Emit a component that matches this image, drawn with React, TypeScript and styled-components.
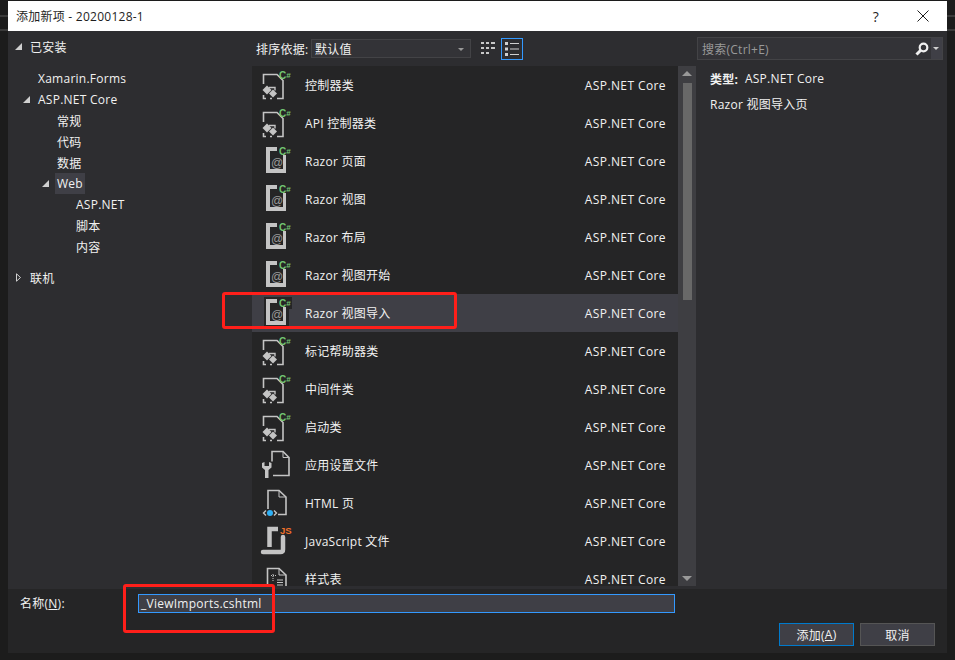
import React from "react";
import styled, { createGlobalStyle } from "styled-components";

const FONT = `"Open Sans", "Noto Sans CJK SC", sans-serif`;

const GlobalStyle = createGlobalStyle`
  html, body {
    margin: 0;
    padding: 0;
    background: #1c1c1c;
  }
  * {
    box-sizing: border-box;
  }
`;

type IconKind = "class" | "razor" | "settings" | "html" | "js" | "style";

const templates: { label: string; icon: IconKind }[] = [
  { label: "控制器类", icon: "class" },
  { label: "API 控制器类", icon: "class" },
  { label: "Razor 页面", icon: "razor" },
  { label: "Razor 视图", icon: "razor" },
  { label: "Razor 布局", icon: "razor" },
  { label: "Razor 视图开始", icon: "razor" },
  { label: "Razor 视图导入", icon: "razor" },
  { label: "标记帮助器类", icon: "class" },
  { label: "中间件类", icon: "class" },
  { label: "启动类", icon: "class" },
  { label: "应用设置文件", icon: "settings" },
  { label: "HTML 页", icon: "html" },
  { label: "JavaScript 文件", icon: "js" },
  { label: "样式表", icon: "style" },
];

const tree: { label: string; level: number; open?: boolean; active?: boolean }[] = [
  { label: "Xamarin.Forms", level: 1 },
  { label: "ASP.NET Core", level: 1, open: true },
  { label: "常规", level: 2 },
  { label: "代码", level: 2 },
  { label: "数据", level: 2 },
  { label: "Web", level: 2, open: true, active: true },
  { label: "ASP.NET", level: 3 },
  { label: "脚本", level: 3 },
  { label: "内容", level: 3 },
];

const CSharp = () => (
  <text x="19" y="13" fontFamily={`"Liberation Sans", sans-serif`} fontSize="10" fontWeight="700" fill="#72c472" letterSpacing="0">
    C<tspan fontSize="8" dy="-1">#</tspan>
  </text>
);

const TemplateIcon = ({ kind, backed }: { kind: IconKind; backed?: boolean }) => (
  <svg width="32" height="38" viewBox="0 0 32 38">
    {kind === "class" && (
      <>
        <path d="M3.500 18V8.500H17L23 14.500V32.500H17" fill="none" stroke="#c4c4c4" strokeWidth="1.600" />
        <path d="M3.500 29V32.500H6M12 32.500H10" fill="none" stroke="#c4c4c4" strokeWidth="1.600" />
        <path d="M2.500 24l4.500-4.500 4.500 4.500-4.500 4.500z" fill="#c4c4c4" />
        <path d="M9 27.500l4-4 4 4-4 4z" fill="#c4c4c4" />
        <path d="M9 21.500h6v3" fill="none" stroke="#c4c4c4" strokeWidth="1.400" />
        <CSharp />
      </>
    )}
    {kind === "razor" && (
      <>
        {backed && <path d="M4 3H32V15H29V33H4z" fill="#252526" />}
        <path d="M6 5H17V9H10V27H23V13H26V31H6z" fill="#c4c4c4" />
        <text x="11" y="25" fontFamily={`"Liberation Sans", sans-serif`} fontSize="12" fill="#9a9a9a" letterSpacing="0">
          @
        </text>
        <CSharp />
      </>
    )}
    {kind === "settings" && (
      <>
        <path d="M12 15.500V5.500H23L29 11.500V29.500H13" fill="none" stroke="#c4c4c4" strokeWidth="1.600" />
        <path d="M23 5.500V11.500H29" fill="none" stroke="#c4c4c4" strokeWidth="1" />
        <path d="M2 17V21.500L5 24V32H8.500V24L11.500 21.500V17L9 16V20H4.500V16z" fill="#c4c4c4" />
      </>
    )}
    {kind === "html" && (
      <>
        <path d="M8 25V6.500H19L26 13V30.500H18" fill="none" stroke="#c4c4c4" strokeWidth="1.600" />
        <path d="M19 6.500V13H26" fill="none" stroke="#c4c4c4" strokeWidth="1" />
        <path d="M6 26.500L3.500 29L6 31.500M14 26.500L16.500 29L14 31.500" fill="none" stroke="#c4c4c4" strokeWidth="1.400" />
        <circle cx="10" cy="29" r="3" fill="#2fb0f5" />
      </>
    )}
    {kind === "js" && (
      <>
        <path d="M9.500 25V7H18" fill="none" stroke="#c4c4c4" strokeWidth="4.500" />
        <path d="M23 15V27.500C23 29 22 30 20.500 30H3" fill="none" stroke="#c4c4c4" strokeWidth="4.500" strokeLinecap="round" />
        <text x="20" y="12" fontFamily={`"Liberation Sans", sans-serif`} fontSize="9.500" fontWeight="700" fill="#f0702a" letterSpacing="0">
          JS
        </text>
      </>
    )}
    {kind === "style" && (
      <>
        <path d="M7.500 26V8.500H19L26 15V33H12" fill="none" stroke="#c4c4c4" strokeWidth="1.600" />
        <path d="M19 8.500V15H26" fill="none" stroke="#c4c4c4" strokeWidth="1" />
        <path d="M13 14V22M11 15.500H16" fill="none" stroke="#c4c4c4" strokeWidth="1" strokeDasharray="1 1" />
        <path d="M17 20H23M17 22.500H23M17 25H23" stroke="#c4c4c4" strokeWidth="1" />
        <path d="M8 25l3 0 0 3z" fill="#e5506a" />
      </>
    )}
  </svg>
);

const Caret = ({ open }: { open?: boolean }) => (
  <svg width="7" height="9" viewBox="0 0 7 9">
    {open ? (
      <path d="M0 8L7 1V8z" fill="#d0d0d0" />
    ) : (
      <path d="M1.500 0.800L5.500 4.500L1.500 8.200z" fill="none" stroke="#d0d0d0" strokeWidth="1" />
    )}
  </svg>
);

export default function App() {
  return (
    <Backdrop>
      <GlobalStyle />
      <Dialog>
        <TitleBar>
          <span>添加新项 - 20200128-1</span>
          <TitleButtons>
            <TitleHelp>?</TitleHelp>
            <svg width="12" height="12" viewBox="0 0 12 12">
              <path d="M0.500 0.500L11.500 11.500M11.500 0.500L0.500 11.500" stroke="#1e1e1e" strokeWidth="1" />
            </svg>
          </TitleButtons>
        </TitleBar>

        <Main>
          <TreePane>
            <TreeRow $level={0}>
              <CaretSlot><Caret open /></CaretSlot>
              <TreeLabel>已安装</TreeLabel>
            </TreeRow>
            <TreeGroup>
              {tree.map((item) => (
                <TreeRow key={item.label} $level={item.level}>
                  <CaretSlot>{item.open && <Caret open />}</CaretSlot>
                  <TreeLabel $active={item.active}>{item.label}</TreeLabel>
                </TreeRow>
              ))}
            </TreeGroup>
            <TreeRow $level={0}>
              <CaretSlot><Caret /></CaretSlot>
              <TreeLabel>联机</TreeLabel>
            </TreeRow>
          </TreePane>

          <CenterPane>
            <Toolbar>
              <SortLabel>排序依据:</SortLabel>
              <SortSelect>
                <span>默认值</span>
                <SelectArrow />
              </SortSelect>
              <ViewButton>
                <svg width="14" height="15" viewBox="0 0 14 15">
                  <path d="M0 1h3v2H0zM5 1h3v2H5zM10 1h4v2h-4zM0 6h3v2H0zM5 6h3v2H5zM10 6h4v2h-4zM0 11h3v2H0zM5 11h3v2H5z" fill="#c8c8c8" />
                </svg>
              </ViewButton>
              <ViewButton $active>
                <svg width="14" height="14" viewBox="0 0 14 14">
                  <path d="M0 0h3v3H0zM0 5.500h3v3H0zM0 11h3v3H0z" fill="#d0d0d0" />
                  <path d="M5 1.500h9M5 7h9M5 12.500h9" stroke="#d0d0d0" strokeWidth="1" />
                </svg>
              </ViewButton>
            </Toolbar>
            <ListArea>
              <TemplateList>
                {templates.map((item, index) => (
                  <TemplateRow key={item.label} $selected={index === 6}>
                    <TemplateIcon kind={item.icon} backed={index === 6} />
                    <TemplateName>{item.label}</TemplateName>
                    <TemplateType>ASP.NET Core</TemplateType>
                  </TemplateRow>
                ))}
              </TemplateList>
              <ScrollBar>
                <ScrollArrow $up />
                <ScrollTrack>
                  <ScrollThumb />
                </ScrollTrack>
                <ScrollArrow />
              </ScrollBar>
            </ListArea>
          </CenterPane>

          <DetailPane>
            <SearchBox>
              <SearchText>搜索(Ctrl+E)</SearchText>
              <SearchIcon>
                <svg width="14" height="14" viewBox="0 0 14 14">
                  <circle cx="8.500" cy="5.500" r="3.800" fill="none" stroke="#f0f0f0" strokeWidth="2.200" />
                  <path d="M5.500 8.500L1.500 12.500" stroke="#f0f0f0" strokeWidth="3" />
                </svg>
              </SearchIcon>
              <SearchDrop />
            </SearchBox>
            <DetailLine>
              <b>类型:</b>&nbsp; ASP.NET Core
            </DetailLine>
            <DetailLine>Razor 视图导入页</DetailLine>
          </DetailPane>
        </Main>

        <Footer>
          <NameRow>
            <NameLabel>
              名称(<u>N</u>):
            </NameLabel>
            <NameInput>_ViewImports.cshtml</NameInput>
          </NameRow>
          <ButtonRow>
            <DialogButton $primary>
              添加(<u>A</u>)
            </DialogButton>
            <DialogButton>取消</DialogButton>
          </ButtonRow>
        </Footer>
      </Dialog>
      <Callout $x={222} $y={292} $w={235} $h={37} />
      <Callout $x={123} $y={584} $w={152} $h={49} />
    </Backdrop>
  );
}

const Backdrop = styled.div`
  position: relative;
  width: 955px;
  height: 660px;
  padding: 1px 8px 7px 8px;
  overflow: hidden;
  background: linear-gradient(#1c1c1c 15px, #3a3a3a 15px, #3a3a3a 17px, #1c1c1c 17px, #1c1c1c 29px, #3a3a3a 29px, #3a3a3a 31px, #1c1c1c 31px);
  font-family: ${FONT};
  font-size: 12px;
  letter-spacing: 0.25px;
  color: #f1f1f1;
`;

const Dialog = styled.div`
  display: flex;
  flex-direction: column;
  height: 652px;
  background: #2d2d30;
`;

const TitleBar = styled.div`
  display: flex;
  align-items: center;
  justify-content: space-between;
  flex: 0 0 30px;
  padding: 0 18px 0 8px;
  background: #ffffff;
  color: #1e1e1e;
  font-size: 12px;
`;

const TitleButtons = styled.div`
  display: flex;
  align-items: center;
  gap: 38px;
`;

const TitleHelp = styled.span`
  font-size: 14px;
`;

const Main = styled.div`
  display: grid;
  grid-template-columns: 244px 444px 251px;
  flex: 0 0 558px;
`;

const TreePane = styled.div`
  display: flex;
  flex-direction: column;
  padding: 5px 0 0 7px;
`;

const TreeGroup = styled.div`
  display: flex;
  flex-direction: column;
  padding: 11px 0 10px;
`;

const TreeRow = styled.div<{ $level: number }>`
  display: flex;
  align-items: center;
  height: 21px;
  padding-left: ${(p) => (p.$level > 0 ? p.$level * 19 - 11 : 0)}px;
`;

const CaretSlot = styled.span`
  display: flex;
  align-items: center;
  width: 11px;
  margin-right: 2px;
`;

const TreeLabel = styled.span<{ $active?: boolean }>`
  display: flex;
  align-items: center;
  height: 21px;
  padding: 0 2px;
  background: ${(p) => (p.$active ? "#3f3f46" : "transparent")};
  color: #f1f1f1;
`;

const CenterPane = styled.div`
  display: flex;
  flex-direction: column;
  min-width: 0;
`;

const Toolbar = styled.div`
  display: flex;
  align-items: center;
  flex: 0 0 35px;
  padding: 0 0 0 4px;
`;

const SortLabel = styled.span`
  width: 55px;
  white-space: nowrap;
`;

const SortSelect = styled.div`
  display: flex;
  align-items: center;
  justify-content: space-between;
  width: 160px;
  height: 19px;
  margin-right: 6px;
  padding: 0 6px 0 3px;
  background: #333337;
  border: 1px solid #434346;
`;

const SelectArrow = styled.span`
  width: 0;
  height: 0;
  margin-top: 2px;
  border-left: 3px solid transparent;
  border-right: 3px solid transparent;
  border-top: 3px solid #999999;
`;

const ViewButton = styled.div<{ $active?: boolean }>`
  display: flex;
  align-items: center;
  justify-content: center;
  width: 22px;
  height: 22px;
  margin-right: ${(p) => (p.$active ? "0" : "2px")};
  border: 1px solid ${(p) => (p.$active ? "#3399ff" : "transparent")};
`;

const ListArea = styled.div`
  display: flex;
  height: 520px;
`;

const TemplateList = styled.div`
  flex: 1;
  display: flex;
  flex-direction: column;
  overflow: hidden;
  background: #252526;
`;

const TemplateRow = styled.div<{ $selected?: boolean }>`
  display: flex;
  align-items: center;
  flex: 0 0 38px;
  padding: 0 12px 0 8px;
  background: ${(p) => (p.$selected ? "#3f3f46" : "transparent")};
`;

const TemplateName = styled.span`
  flex: 1;
  margin-left: 13px;
`;

const TemplateType = styled.span`
  letter-spacing: 0.4px;
`;

const ScrollBar = styled.div`
  display: flex;
  flex-direction: column;
  align-items: center;
  flex: 0 0 18px;
  background: #3e3e42;
`;

const ScrollArrow = styled.span<{ $up?: boolean }>`
  flex: 0 0 5px;
  width: 0;
  height: 0;
  margin: ${(p) => (p.$up ? "5px 0 0" : "0 0 5px")};
  border-left: 5px solid transparent;
  border-right: 5px solid transparent;
  ${(p) => (p.$up ? "border-bottom: 5px solid #999999;" : "border-top: 5px solid #999999;")}
`;

const ScrollTrack = styled.div`
  flex: 1;
  width: 9px;
  padding-top: 7px;
`;

const ScrollThumb = styled.div`
  width: 9px;
  height: 217px;
  background: #686868;
`;

const DetailPane = styled.div`
  display: flex;
  flex-direction: column;
  padding: 6px 4px 0 1px;
`;

const SearchBox = styled.div`
  display: flex;
  align-items: stretch;
  height: 23px;
  margin-bottom: 6px;
  background: #333337;
  border: 1px solid #434346;
`;

const SearchText = styled.span`
  flex: 1;
  align-self: center;
  padding-left: 4px;
  color: #999999;
`;

const SearchIcon = styled.span`
  display: flex;
  align-items: center;
  justify-content: center;
  width: 18px;
`;

const SearchDrop = styled.span`
  flex: 0 0 11px;
  background: #3f3f46;
  position: relative;

  &::after {
    content: "";
    position: absolute;
    left: 2px;
    top: 9px;
    border-left: 3px solid transparent;
    border-right: 3px solid transparent;
    border-top: 3px solid #d0d0d0;
  }
`;

const DetailLine = styled.div`
  display: flex;
  align-items: center;
  height: 25px;
  padding-left: 13px;
  white-space: pre;

  b {
    font-weight: 700;
  }
`;

const Footer = styled.div`
  flex: 1;
  display: flex;
  flex-direction: column;
  background: #252526;
`;

const NameRow = styled.div`
  display: flex;
  align-items: center;
  padding: 5px 0 0 12px;
`;

const NameLabel = styled.span`
  width: 118px;
  margin-top: -2px;
`;

const NameInput = styled.div`
  width: 537px;
  height: 19px;
  padding-left: 2px;
  line-height: 17px;
  background: #3f3f46;
  border: 1px solid #3399ff;
`;

const ButtonRow = styled.div`
  display: flex;
  justify-content: flex-end;
  gap: 6px;
  padding: 10px 12px 0 0;
`;

const DialogButton = styled.div<{ $primary?: boolean }>`
  display: flex;
  align-items: center;
  justify-content: center;
  width: 75px;
  height: 23px;
  background: #3f3f46;
  border: 1px solid ${(p) => (p.$primary ? "#007acc" : "#555555")};
`;

const Callout = styled.div<{ $x: number; $y: number; $w: number; $h: number }>`
  position: absolute;
  left: ${(p) => p.$x}px;
  top: ${(p) => p.$y}px;
  width: ${(p) => p.$w}px;
  height: ${(p) => p.$h}px;
  border: 3px solid #ff1f1a;
  border-radius: 3px;
`;
